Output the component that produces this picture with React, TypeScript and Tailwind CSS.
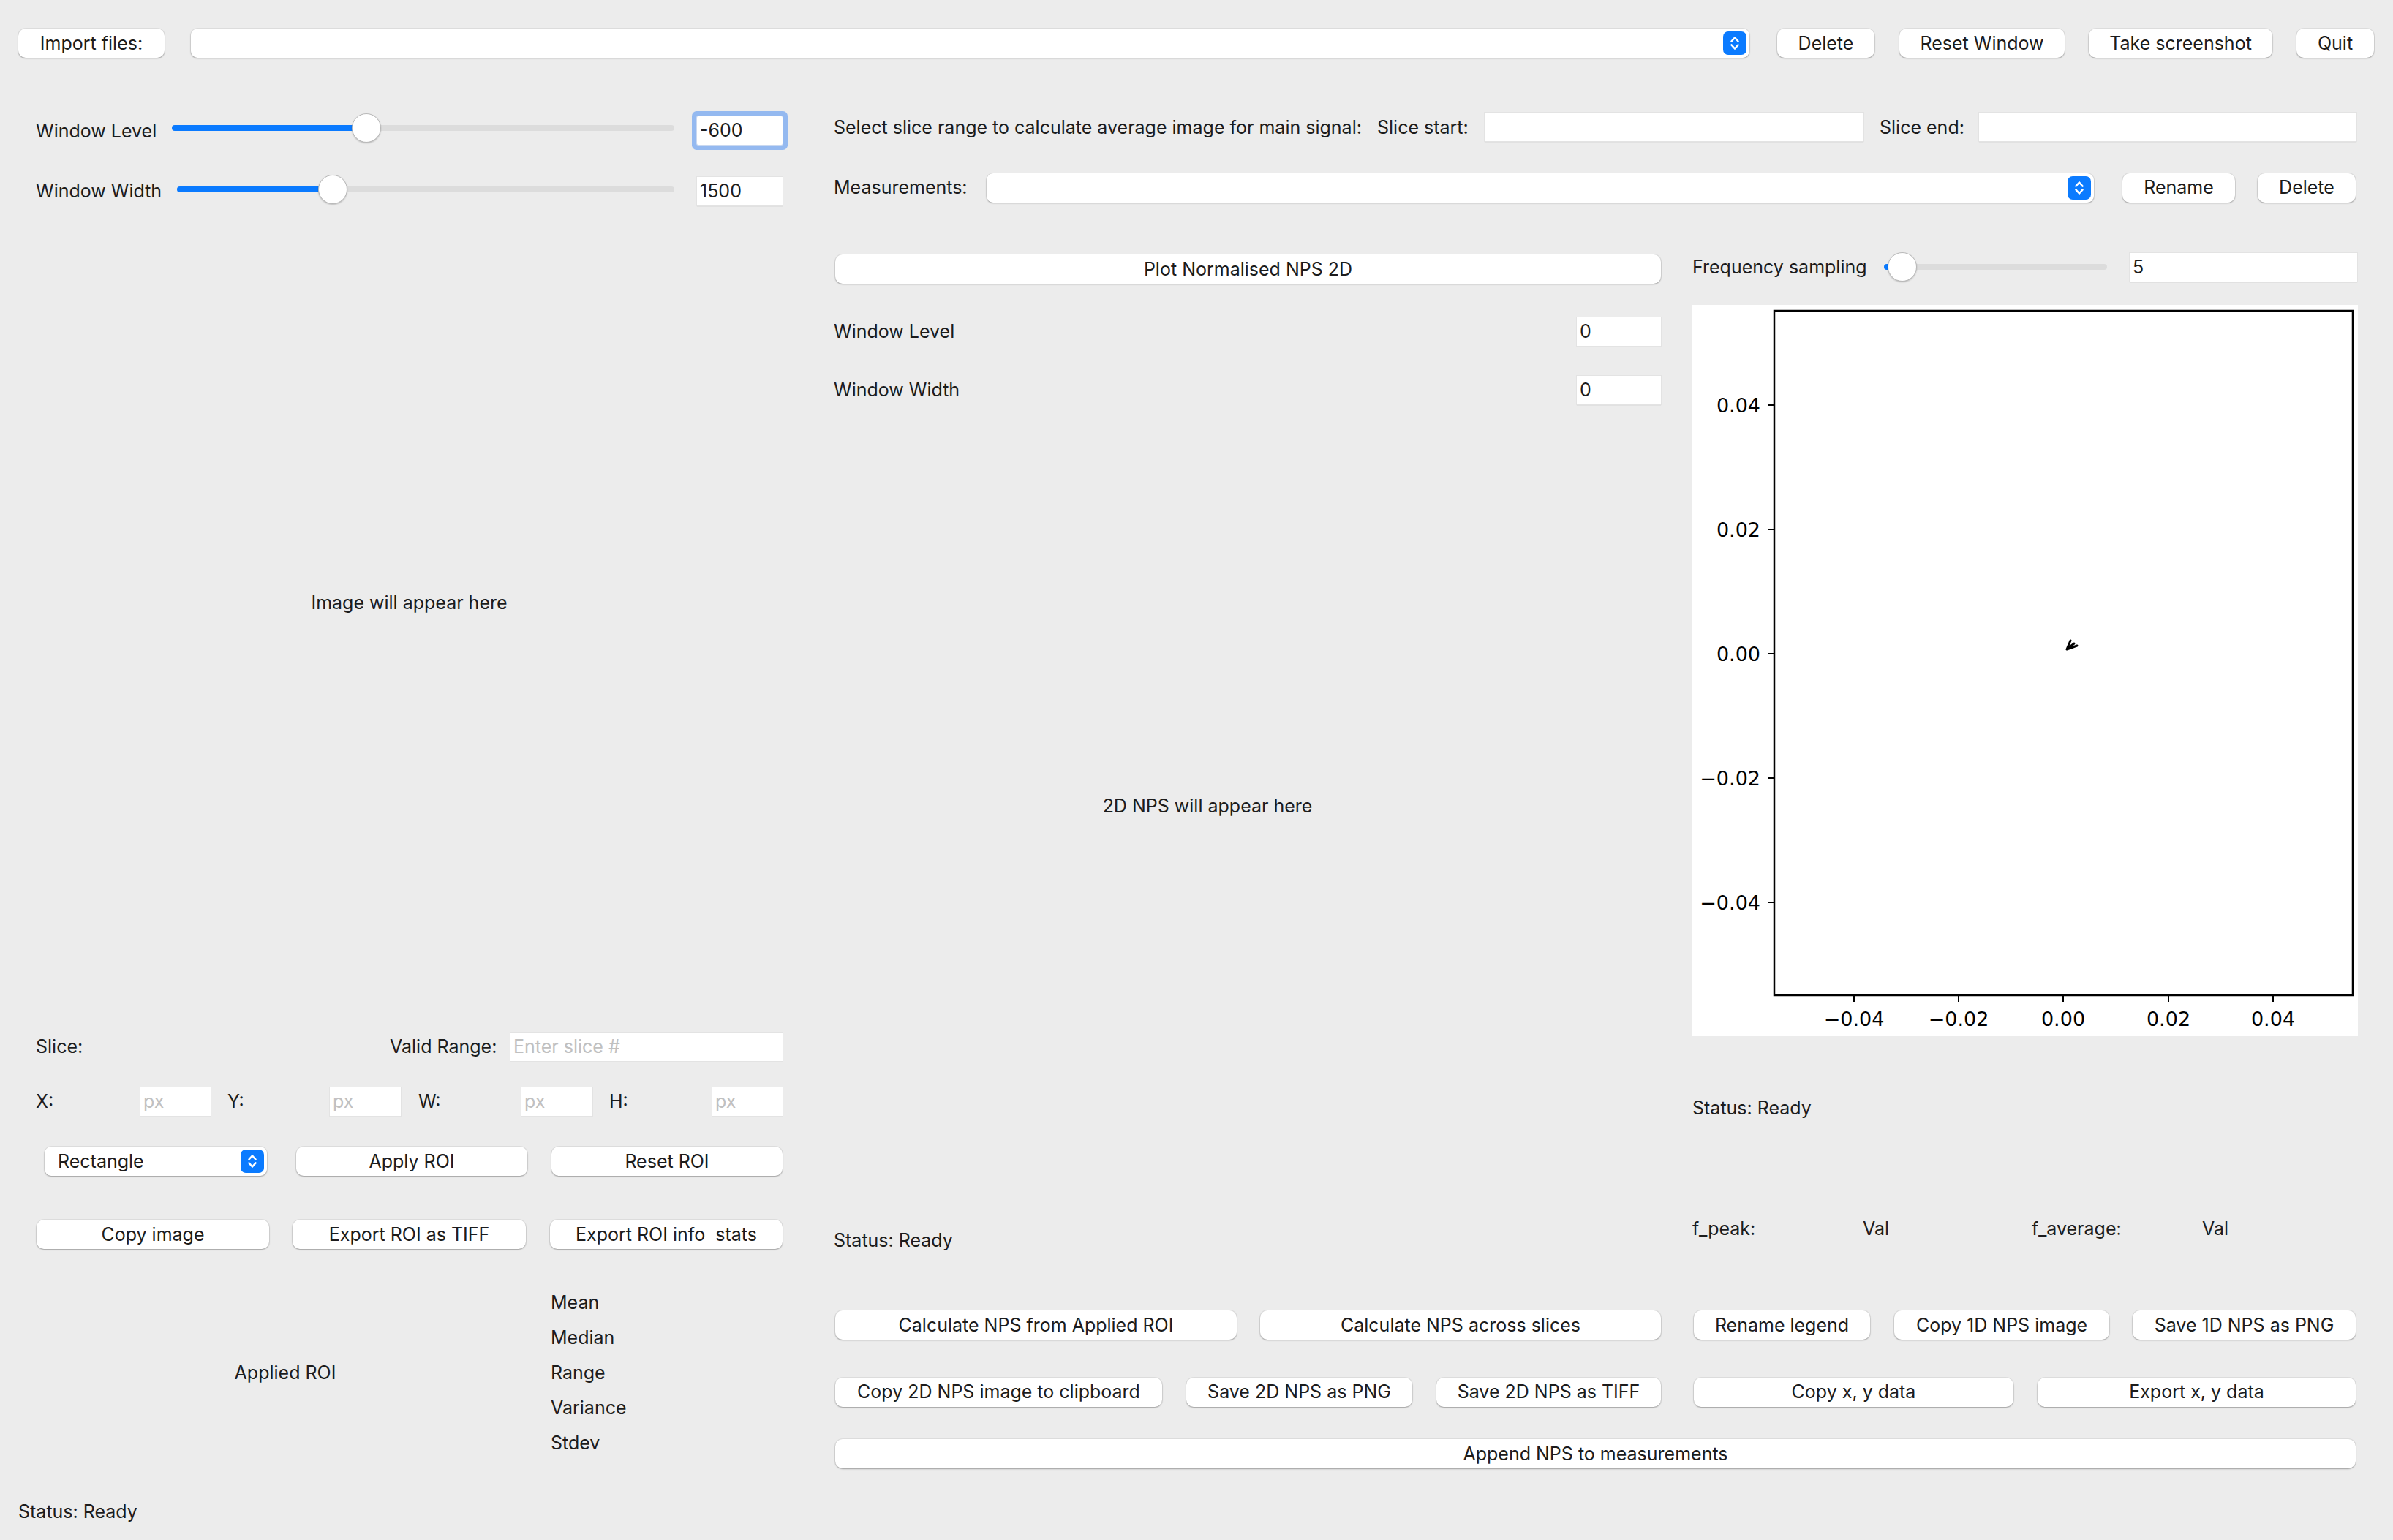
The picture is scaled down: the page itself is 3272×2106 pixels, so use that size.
import React from "react";

const Btn = ({ label, className = "" }: { label: string; className?: string }) => (
  <button className={`flex h-[40px] shrink-0 items-center justify-center whitespace-pre rounded-[10px] bg-white text-[25px] text-[#1c1c1c] shadow-[0_0_0_1px_rgba(0,0,0,0.05),0_1px_2px_rgba(0,0,0,0.3)] ${className}`}>
    {label}
  </button>
);

const Stepper = () => (
  <span className="flex h-[32px] w-[32px] items-center justify-center rounded-[7px] bg-[#0b7bff]">
    <svg width="16" height="24" viewBox="0 0 16 24" fill="none" stroke="white" strokeWidth="2.6" strokeLinecap="round" strokeLinejoin="round">
      <path d="M3.5 9.5l4.5-5 4.5 5" />
      <path d="M3.5 14.5l4.5 5 4.5-5" />
    </svg>
  </span>
);

const Combo = ({ value = "", className = "" }: { value?: string; className?: string }) => (
  <div className={`flex h-[40px] shrink-0 items-center justify-between rounded-[9px] bg-white pl-[18px] pr-[4px] shadow-[0_0_0_1px_rgba(0,0,0,0.05),0_1px_2px_rgba(0,0,0,0.3)] ${className}`}>
    <span>{value}</span>
    <Stepper />
  </div>
);

const Field = ({
  value,
  placeholder,
  focused = false,
  className = "",
}: {
  value?: string;
  placeholder?: string;
  focused?: boolean;
  className?: string;
}) => (
  <div
    className={`flex h-[39px] shrink-0 items-center bg-white pl-[4px] ${
      focused ? "rounded-[2px] shadow-[0_0_0_1px_#c9d8f0,0_0_0_7px_#94b9f0]" : "shadow-[0_0_0_1px_#e3e3e3,0_1px_1px_#aeaeae]"
    } ${className}`}
  >
    {value ? <span>{value}</span> : <span className="text-[#c0c0c0]">{placeholder}</span>}
  </div>
);

const Slider = ({ width, pos }: { width: number; pos: number }) => (
  <div className="relative h-[40px] shrink-0" style={{ width }}>
    <div className="absolute left-0 right-0 top-[16px] h-[8px] rounded-full bg-[#dcdcdc]" />
    <div className="absolute left-0 top-[16px] h-[8px] rounded-full bg-[#0a7aff]" style={{ width: pos }} />
    <div
      className="absolute top-0 h-[40px] w-[40px] rounded-full border border-[#b8b8b8] bg-white shadow-[0_1px_2px_rgba(0,0,0,0.2)]"
      style={{ left: pos - 20 }}
    />
  </div>
);

const yTicks = [
  { y: 137, t: "0.04" },
  { y: 307, t: "0.02" },
  { y: 477, t: "0.00" },
  { y: 647, t: "\u22120.02" },
  { y: 817, t: "\u22120.04" },
];
const xTicks = [
  { x: 221, t: "\u22120.04" },
  { x: 364, t: "\u22120.02" },
  { x: 507, t: "0.00" },
  { x: 651, t: "0.02" },
  { x: 794, t: "0.04" },
];

const NpsPlot = () => (
  <svg width="910" height="1000" viewBox="0 0 910 1000" className="block bg-white">
    <rect x="112" y="8" width="791" height="936" fill="white" stroke="black" strokeWidth="2.5" />
    {yTicks.map((k) => (
      <g key={k.t}>
        <line x1="103" y1={k.y} x2="112" y2={k.y} stroke="black" strokeWidth="2" />
        <text x="93" y={k.y + 10} textAnchor="end" fontFamily="DejaVu Sans" fontSize="27" fill="black">
          {k.t}
        </text>
      </g>
    ))}
    {xTicks.map((k) => (
      <g key={k.t}>
        <line x1={k.x} y1="944" x2={k.x} y2="953" stroke="black" strokeWidth="2" />
        <text x={k.x} y="986" textAnchor="middle" fontFamily="DejaVu Sans" fontSize="27" fill="black">
          {k.t}
        </text>
      </g>
    ))}
    <path d="M512 471L522 463M512 471L517 459M512 471L526 466" stroke="black" strokeWidth="3" strokeLinecap="round" fill="none" />
  </svg>
);

export default function App() {
  return (
    <div className="flex h-[2106px] w-[3272px] flex-col overflow-hidden bg-[#ececec] pl-[25px] font-['Inter','Noto_Sans',sans-serif] text-[25px] leading-none text-[#1c1c1c]">
      {/* top bar */}
      <div className="mt-[38px] flex h-[42px] w-[3221px] items-center">
        <Btn label="Import files:" className="w-[200px]" />
        <Combo className="ml-[36px] w-[2131px]" />
        <Btn label="Delete" className="ml-[38px] w-[133px]" />
        <Btn label="Reset Window" className="ml-[34px] w-[226px]" />
        <Btn label="Take screenshot" className="ml-[33px] w-[251px]" />
        <Btn label="Quit" className="ml-[33px] w-[106px]" />
      </div>

      <div className="flex">
        {/* left column */}
        <div className="flex w-[1045px] flex-col">
          <div className="mt-[75px] flex h-[40px] items-center pl-[24px]">
            <span className="mt-[8px] w-[186px] shrink-0">Window Level</span>
            <Slider width={687} pos={266} />
            <Field value="-600" focused className="ml-[31px] mt-[6px] w-[117px]" />
          </div>
          <div className="mt-[44px] flex h-[40px] items-center pl-[24px]">
            <span className="mt-[4px] w-[193px] shrink-0">Window Width</span>
            <Slider width={680} pos={213} />
            <Field value="1500" className="ml-[31px] mt-[4px] w-[117px]" />
          </div>
          <div className="flex h-[1090px] items-center justify-center pl-[24px]">Image will appear here</div>
          <div className="mt-[42px] flex h-[40px] items-center pl-[24px]">
            <span className="w-[484px] shrink-0">Slice:</span>
            <span className="w-[165px] shrink-0">Valid Range:</span>
            <Field placeholder="Enter slice #" className="w-[372px]" />
          </div>
          <div className="mt-[35px] flex h-[40px] items-center pl-[24px]">
            <span className="w-[143px] shrink-0">X:</span>
            <Field placeholder="px" className="w-[96px]" />
            <span className="ml-[23px] w-[140px] shrink-0">Y:</span>
            <Field placeholder="px" className="w-[97px]" />
            <span className="ml-[24px] w-[141px] shrink-0">W:</span>
            <Field placeholder="px" className="w-[97px]" />
            <span className="ml-[23px] w-[141px] shrink-0">H:</span>
            <Field placeholder="px" className="w-[96px]" />
          </div>
          <div className="mt-[42px] flex h-[40px] items-center pl-[24px]">
            <Combo value="Rectangle" className="ml-[12px] w-[304px] pl-[17px]" />
            <Btn label="Apply ROI" className="ml-[40px] w-[316px]" />
            <Btn label="Reset ROI" className="ml-[33px] w-[316px]" />
          </div>
          <div className="mt-[60px] flex h-[40px] items-center pl-[25px]">
            <Btn label="Copy image" className="w-[318px]" />
            <Btn label="Export ROI as TIFF" className="ml-[32px] w-[319px]" />
            <Btn label="Export ROI info  stats" className="ml-[33px] w-[318px]" />
          </div>
          <div className="mt-[49px] flex pl-[24px]">
            <div className="flex w-[682px] items-center justify-center">Applied ROI</div>
            <div className="ml-[22px] flex flex-col">
              {["Mean", "Median", "Range", "Variance", "Stdev"].map((s) => (
                <div key={s} className="flex h-[48px] items-center">
                  {s}
                </div>
              ))}
            </div>
          </div>
          <div className="mt-[55px] flex h-[30px] items-center">Status: Ready</div>
        </div>

        {/* right area */}
        <div className="ml-[70px] flex w-[2084px] flex-col">
          <div className="mt-[73px] flex h-[40px] items-center">
            <span className="mt-[3px] w-[890px] shrink-0 whitespace-pre">Select slice range to calculate average image for main signal:   Slice start:</span>
            <Field className="w-[518px]" />
            <span className="mt-[3px] w-[158px] shrink-0 pl-[22px]">Slice end:</span>
            <Field className="w-[516px]" />
          </div>
          <div className="mt-[42px] flex h-[43px] items-center">
            <span className="w-[209px] shrink-0">Measurements:</span>
            <Combo className="w-[1514px]" />
            <Btn label="Rename" className="ml-[39px] w-[154px]" />
            <Btn label="Delete" className="ml-[31px] w-[134px]" />
          </div>

          <div className="mt-[67px] flex h-[1447px]">
            {/* middle column */}
            <div className="flex w-[1131px] flex-col">
              <Btn label="Plot Normalised NPS 2D" className="ml-[2px] mt-[3px] w-[1129px]" />
              <div className="mt-[45px] flex h-[40px] items-center justify-between">
                <span>Window Level</span>
                <Field value="0" className="w-[115px]" />
              </div>
              <div className="mt-[40px] flex h-[40px] items-center justify-between">
                <span>Window Width</span>
                <Field value="0" className="w-[115px]" />
              </div>
              <div className="flex h-[1098px] items-center justify-center pr-[109px]">2D NPS will appear here</div>
              <div className="mt-[30px] flex h-[30px] items-center">Status: Ready</div>
            </div>
            {/* right column */}
            <div className="ml-[43px] flex w-[910px] flex-col">
              <div className="flex h-[40px] items-center">
                <span className="w-[262px] shrink-0">Frequency sampling</span>
                <Slider width={305} pos={25} />
                <Field value="5" className="ml-[31px] w-[311px]" />
              </div>
              <div className="mt-[32px]">
                <NpsPlot />
              </div>
              <div className="mt-[83px] flex h-[30px] items-center">Status: Ready</div>
              <div className="mt-[135px] flex h-[30px] items-center">
                <span className="w-[233px]">f_peak:</span>
                <span className="w-[231px]">Val</span>
                <span className="w-[233px]">f_average:</span>
                <span>Val</span>
              </div>
            </div>
          </div>

          <div className="flex h-[40px] items-center">
            <Btn label="Calculate NPS from Applied ROI" className="ml-[2px] w-[549px]" />
            <Btn label="Calculate NPS across slices" className="ml-[32px] w-[548px]" />
            <Btn label="Rename legend" className="ml-[45px] w-[241px]" />
            <Btn label="Copy 1D NPS image" className="ml-[33px] w-[294px]" />
            <Btn label="Save 1D NPS as PNG" className="ml-[32px] w-[305px]" />
          </div>
          <div className="mt-[51px] flex h-[41px] items-center">
            <Btn label="Copy 2D NPS image to clipboard" className="ml-[2px] w-[447px]" />
            <Btn label="Save 2D NPS as PNG" className="ml-[33px] w-[309px]" />
            <Btn label="Save 2D NPS as TIFF" className="ml-[33px] w-[307px]" />
            <Btn label="Copy x, y data" className="ml-[45px] w-[437px]" />
            <Btn label="Export x, y data" className="ml-[33px] w-[435px]" />
          </div>
          <div className="mt-[44px] flex h-[40px] items-center">
            <Btn label="Append NPS to measurements" className="ml-[2px] w-[2079px]" />
          </div>
        </div>
      </div>
    </div>
  );
}
